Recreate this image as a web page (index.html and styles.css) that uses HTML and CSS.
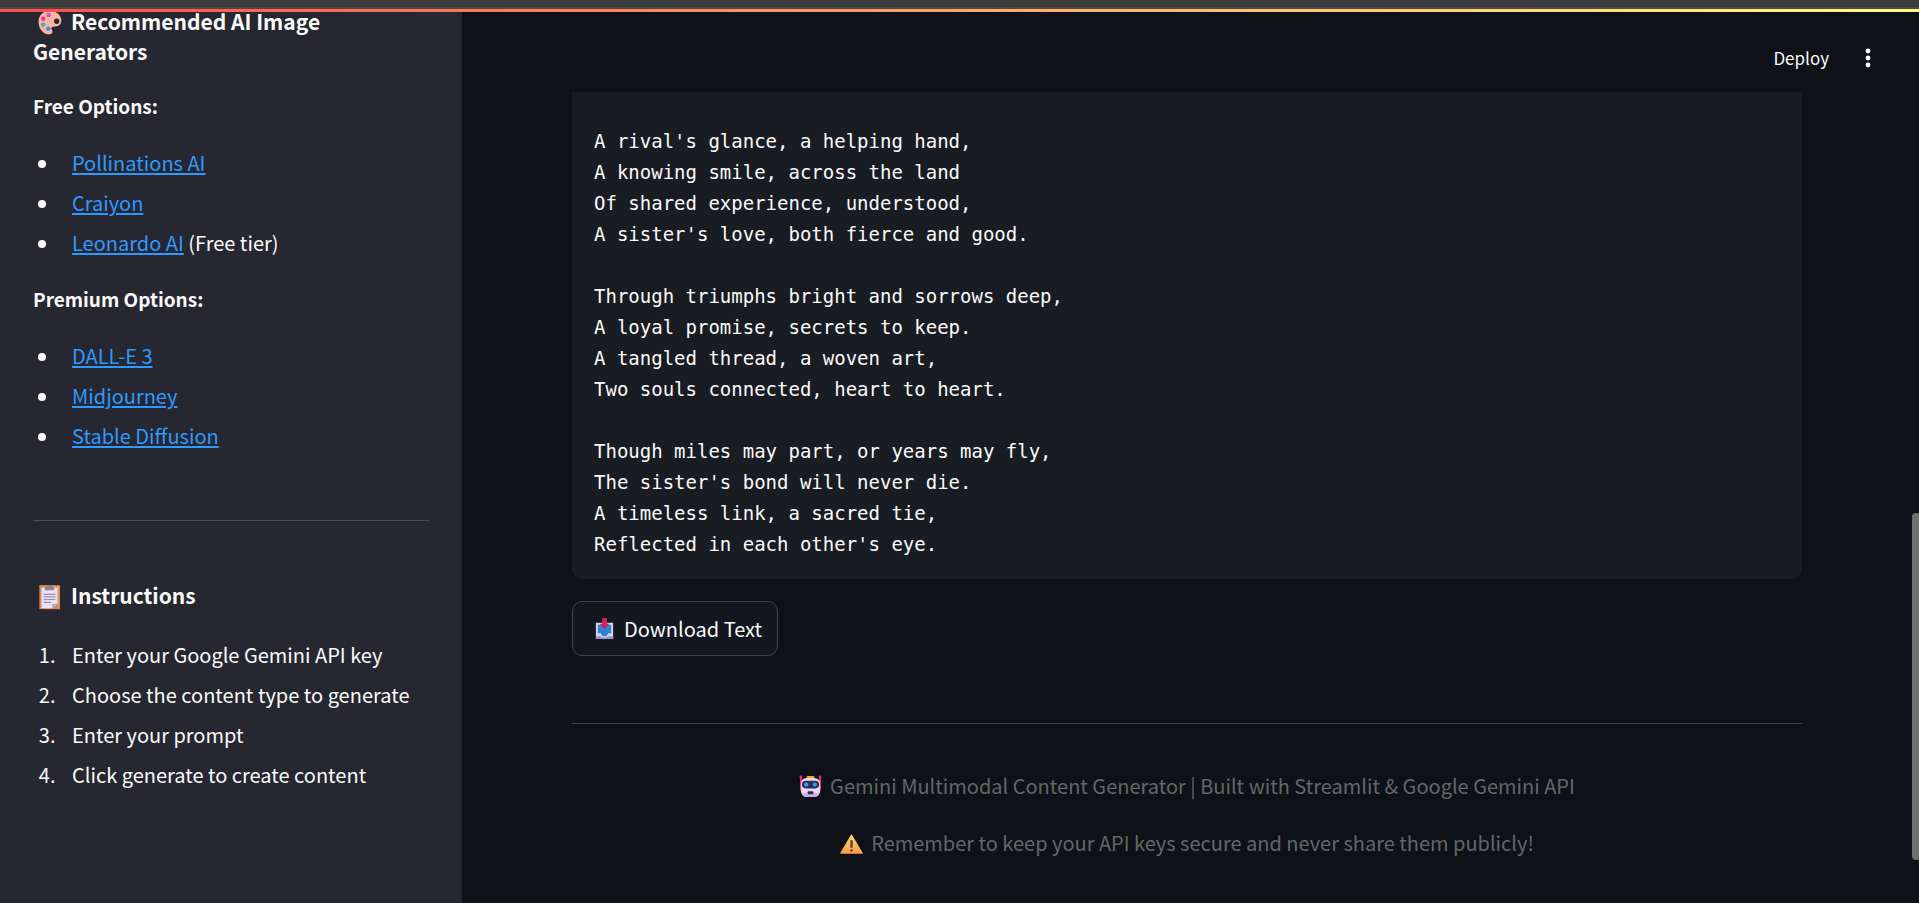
FILE: index.html
```html
<!DOCTYPE html>
<html lang="en">
<head>
<meta charset="utf-8">
<title>Gemini Multimodal Content Generator</title>
<link rel="stylesheet" href="styles.css">
</head>
<body>
<div class="decoration"></div>
<div class="app">
  <aside class="sidebar">
    <h3 class="heading"><svg class="emoji" viewBox="0 0 32 32" aria-hidden="true"><path fill="#ffb3a0" d="M3 15C3 7 9 2 16 2c8 0 14 5 14 12 0 5-4 7-9 7-3 0-3 2-2 4s1 5-3 5C8 30 3 23 3 15z"/><circle cx="24.500" cy="14.500" r="3.200" fill="#262730"/><circle cx="15" cy="7" r="2.700" fill="#b85cf0"/><circle cx="8.500" cy="11.500" r="2.700" fill="#ee3a86"/><circle cx="8.500" cy="18.500" r="2.700" fill="#3fb9ad"/><circle cx="14.500" cy="23.500" r="2.700" fill="#3f8dfa"/></svg>Recommended AI Image Generators</h3>
    <p class="label">Free Options:</p>
    <ul class="list">
      <li><a href="#pollinations">Pollinations AI</a></li>
      <li><a href="#craiyon">Craiyon</a></li>
      <li><a href="#leonardo">Leonardo AI</a> (Free tier)</li>
    </ul>
    <p class="label">Premium Options:</p>
    <ul class="list">
      <li><a href="#dalle">DALL-E 3</a></li>
      <li><a href="#midjourney">Midjourney</a></li>
      <li><a href="#stable-diffusion">Stable Diffusion</a></li>
    </ul>
    <hr class="rule">
    <h3 class="heading"><svg class="emoji" viewBox="0 0 32 32" aria-hidden="true"><path fill="#d98a52" d="M4 3h24v28H4z"/><path fill="#f2a766" d="M26.500 3H28v28h-1.500zM4 3h24v1.200H4z"/><path fill="#e9e1f5" d="M6.500 5.500h19V24L19 30H6.500z"/><path fill="#b9aed0" d="M19 30v-5.500h6.500z"/><path stroke="#9a8fae" stroke-width="1.300" d="M9 13.500h14M9 16.500h14M9 19.500h14M9 23h9"/><path fill="#8c8390" d="M10.500 8.500V6c0-1 1-2 2-2h1.500c0-2 4-2 4 0h1.500c1 0 2 1 2 2v2.500z"/></svg>Instructions</h3>
    <ol class="list">
      <li>Enter your Google Gemini API key</li>
      <li>Choose the content type to generate</li>
      <li>Enter your prompt</li>
      <li>Click generate to create content</li>
    </ol>
  </aside>
  <div class="page">
    <header class="toolbar">
      <button class="deploy" type="button">Deploy</button>
      <button class="menu" type="button" aria-label="Main menu"><svg viewBox="0 0 24 24" aria-hidden="true"><circle cx="12" cy="5" r="2.400"/><circle cx="12" cy="12" r="2.400"/><circle cx="12" cy="19" r="2.400"/></svg></button>
    </header>
    <main class="content">
<pre class="code"><code>A rival's glance, a helping hand,
A knowing smile, across the land
Of shared experience, understood,
A sister's love, both fierce and good.

Through triumphs bright and sorrows deep,
A loyal promise, secrets to keep.
A tangled thread, a woven art,
Two souls connected, heart to heart.

Though miles may part, or years may fly,
The sister's bond will never die.
A timeless link, a sacred tie,
Reflected in each other's eye.</code></pre>
      <button class="download" type="button"><svg class="emoji-small" viewBox="0 0 24 24" aria-hidden="true"><path fill="#d8d3ea" d="M3 6h18v17H3z"/><path fill="#2b83d6" d="M5 8h14v9h-3l-2 3h-4l-2-3H5z"/><path fill="#a58fca" d="M3 20h5l2 1.500h4l2-1.500h5v3H3z"/><path fill="#d81f55" d="M9.500 1h5v6H17l-5 5.500L7 7h2.500z"/></svg>Download Text</button>
      <hr class="rule rule-main">
      <footer class="footer">
        <p><svg class="emoji-text" viewBox="0 0 24 24" aria-hidden="true"><path fill="#ee2a64" d="M1 2h2v14H1zM21 2h2v14h-2z"/><circle cx="2" cy="2" r="1.500" fill="#ee2a64"/><circle cx="22" cy="2" r="1.500" fill="#ee2a64"/><rect x="8" y="1" width="8" height="4" rx="1" fill="#f6b017"/><rect x="2" y="3" width="20" height="20" rx="6" fill="#e4d8f3"/><path fill="#c9aee4" d="M3 19h18c-1 3-3 4-5 4H8c-2 0-4-1-5-4z"/><rect x="3" y="6" width="18" height="8" rx="4" fill="#382c52"/><circle cx="7.500" cy="10" r="2.200" fill="#25a5ec"/><circle cx="16.500" cy="10" r="2.200" fill="#25a5ec"/><rect x="9" y="17" width="6" height="3" rx="1" fill="#382c52"/></svg>Gemini Multimodal Content Generator | Built with Streamlit &amp; Google Gemini API</p>
        <p><svg class="emoji-text" viewBox="0 0 24 24" aria-hidden="true"><defs><linearGradient id="warn" x1="0" y1="0" x2="0" y2="1"><stop offset="0" stop-color="#fbd45f"/><stop offset="1" stop-color="#ff9c4f"/></linearGradient></defs><path fill="url(#warn)" stroke="url(#warn)" stroke-width="1.500" stroke-linejoin="round" d="M12 3.500 23 22H1z"/><path fill="#4d4150" d="M10.800 8.500h2.400v8h-2.400zM10.800 18h2.400v2.400h-2.400z"/></svg>Remember to keep your API keys secure and never share them publicly!</p>
      </footer>
    </main>
    <div class="scroll-thumb"></div>
  </div>
</div>
</body>
</html>
```
FILE: styles.css
```css
* {
  box-sizing: border-box;
}

body {
  margin: 0;
  background: #0e1117;
  color: #fafafa;
  font-family: "Noto Sans CJK SC", "Noto Sans", sans-serif;
  font-size: 20px;
  line-height: 30px;
}

.decoration {
  position: fixed;
  inset: 0 0 auto 0;
  z-index: 2;
  height: 12px;
  background: linear-gradient(90deg, #ff4b4b, #fffd80) 0 100% / 100% 3px no-repeat,
    linear-gradient(#3c3c3c 7px, #484b4b 7px);
}

.app {
  display: grid;
  grid-template-columns: 462px 1fr;
  min-height: 100vh;
}

.sidebar {
  padding: 6px 33px 0;
  background: #262730;
}

.heading {
  margin: 0 0 25px;
  font-size: 21px;
  font-weight: 600;
  line-height: 30px;
}

.emoji {
  width: 27px;
  height: 27px;
  margin: 0 8px 0 3px;
  vertical-align: -6px;
}

.label {
  margin: 21px 0 22px;
  font-size: 19px;
  font-weight: 700;
}

.list {
  margin: 0;
  padding-left: 27px;
  line-height: 40px;
}

.list li {
  padding-left: 12px;
}

.list a {
  color: #2e9aff;
  text-decoration-thickness: 2px;
  text-underline-offset: 2px;
}

.rule {
  height: 1px;
  margin: 64px 0 59px;
  border: 0;
  background: #4c4d55;
}

.page {
  position: relative;
  min-width: 0;
}

.toolbar {
  display: flex;
  justify-content: flex-end;
  align-items: center;
  gap: 27px;
  height: 92px;
  padding: 24px 39px 0 0;
}

.toolbar button {
  padding: 0;
  border: 0;
  background: none;
  color: inherit;
  font: inherit;
}

.toolbar .deploy {
  font-size: 17px;
}

.menu svg {
  display: block;
  width: 24px;
  height: 24px;
  fill: #fafafa;
}

.content {
  padding: 0 117px 30px 110px;
}

.code {
  margin: 0 0 22px;
  padding: 34px 22px 19px;
  border-radius: 0 0 10px 10px;
  background: #1a1c24;
  font-family: "DejaVu Sans Mono", monospace;
  font-size: 19px;
  line-height: 31px;
  overflow: hidden;
}

.code code {
  font: inherit;
}

.download {
  display: flex;
  align-items: center;
  gap: 8px;
  height: 55px;
  padding: 0 15px 0 20px;
  border: 1px solid #41444c;
  border-radius: 10px;
  background: #131720;
  color: #fafafa;
  font: inherit;
}

.emoji-small {
  width: 23px;
  height: 23px;
}

.rule-main {
  margin: 67px 0 47px;
  background: #3d4046;
}

.footer {
  color: #666;
  text-align: center;
}

.footer p {
  margin: 0 0 27px;
}

.emoji-text {
  width: 23px;
  height: 23px;
  margin-right: 8px;
  vertical-align: -4px;
}

.scroll-thumb {
  position: absolute;
  top: 513px;
  right: 0;
  width: 7px;
  height: 347px;
  border-radius: 4px 0 0 4px;
  background: #6f6f72;
}
```
